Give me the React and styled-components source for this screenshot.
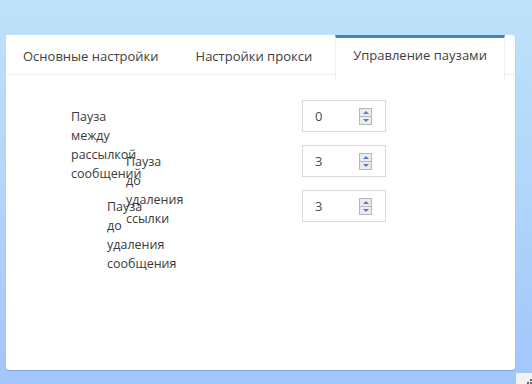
import React, { useState } from "react";
import styled, { createGlobalStyle } from "styled-components";

const GlobalStyle = createGlobalStyle`
  html, body {
    margin: 0;
    padding: 0;
    height: 100%;
  }
  body {
    background: linear-gradient(to bottom, #bfe2f9 0%, #b2d5fa 50%, #a2c5fc 100%);
    font-family: "Open Sans", "Noto Sans", sans-serif;
    overflow: hidden;
  }
`;

const Page = styled.div`
  height: 384px;
  padding: 35px 17px 0 6px;
  box-sizing: border-box;
`;

const Card = styled.div`
  height: 335px;
  background: #fff;
  border-radius: 3px;
  box-shadow: 0 1px 1px rgba(90, 120, 190, 0.45);
`;

const TabBar = styled.div`
  display: flex;
  gap: 3px;
  height: 39px;
  border-bottom: 1px solid #eeeeee;
`;

const Tab = styled.div`
  box-sizing: border-box;
  height: ${(p) => (p.$active ? "45px" : "39px")};
  padding: 0 ${(p) => (p.$active ? 17 : 16)}px;
  margin-left: ${(p) => (p.$active ? 3 : 0)}px;
  display: flex;
  align-items: center;
  font-size: 13px;
  color: #404040;
  white-space: nowrap;
  background: #fff;
  border-top: 3px solid ${(p) => (p.$active ? "#3d8bbd" : "transparent")};
  border-left: 1px solid ${(p) => (p.$active ? "#eeeeee" : "transparent")};
  border-right: 1px solid ${(p) => (p.$active ? "#eeeeee" : "transparent")};
  align-self: flex-start;
  position: relative;
  z-index: ${(p) => (p.$active ? 1 : 0)};
  & > span {
    margin-top: ${(p) => (p.$active ? "-9px" : "0")};
  }
`;

const Form = styled.div`
  padding-top: 25px;
`;

const Row = styled.div`
  display: grid;
  grid-template-columns: 296px 84px;
  height: 45px;
`;

const Label = styled.div`
  padding-left: ${(p) => p.$offset}px;
  font-size: 12.5px;
  line-height: 19px;
  color: #3a3a3a;
  margin-top: 7px;
  position: relative;
  z-index: 1;
`;

const Word = styled.span`
  display: block;
  white-space: nowrap;
`;

const NumberBox = styled.div`
  box-sizing: border-box;
  width: 84px;
  height: 32px;
  border: 1px solid #d6d9de;
  display: flex;
  align-items: center;
  padding: 0 13px 0 12px;
  font-size: 13px;
  color: #4a4a4a;
  background: #fff;
`;

const Value = styled.span`
  flex: 1;
`;

const Spinner = styled.div`
  display: flex;
  flex-direction: column;
  width: 11px;
  height: 15px;
  border: 1px solid #b8b8b8;
  background: #ececec;
`;

const SpinHalf = styled.div`
  flex: 1;
  display: flex;
  align-items: center;
  justify-content: center;
  border-top: ${(p) => (p.$down ? "1px solid #b8b8b8" : "none")};
  &::after {
    content: "";
    border-left: 3px solid transparent;
    border-right: 3px solid transparent;
    ${(p) =>
      p.$down
        ? "border-top: 3px solid #5b78c9;"
        : "border-bottom: 3px solid #5b78c9;"}
  }
`;

const Grip = styled.div`
  position: fixed;
  right: 0;
  bottom: 0;
  width: 16px;
  height: 11px;
  background: #f2f2f2;
  &::after {
    content: "";
    position: absolute;
    right: 0;
    bottom: 0;
    width: 2px;
    height: 2px;
    background: #666;
    box-shadow: 0 -3px 0 #666, -3px 0 0 #666;
  }
`;

const rows = [
  { label: "Пауза между рассылкой сообщений", offset: 65, value: 0 },
  { label: "Пауза до удаления ссылки", offset: 120, value: 3 },
  { label: "Пауза до удаления сообщения", offset: 101, value: 3 },
];

const tabs = ["Основные настройки", "Настройки прокси", "Управление паузами"];

export default function App() {
  const [active] = useState(2);
  return (
    <>
      <GlobalStyle />
      <Page>
        <Card>
          <TabBar>
            {tabs.map((t, i) => (
              <Tab key={t} $active={i === active}>
                <span>{t}</span>
              </Tab>
            ))}
          </TabBar>
          <Form>
            {rows.map((r) => (
              <Row key={r.label}>
                <Label $offset={r.offset}>
                  {r.label.split(" ").map((w) => (
                    <Word key={w}>{w}</Word>
                  ))}
                </Label>
                <NumberBox>
                  <Value>{r.value}</Value>
                  <Spinner>
                    <SpinHalf />
                    <SpinHalf $down />
                  </Spinner>
                </NumberBox>
              </Row>
            ))}
          </Form>
        </Card>
      </Page>
      <Grip />
    </>
  );
}
